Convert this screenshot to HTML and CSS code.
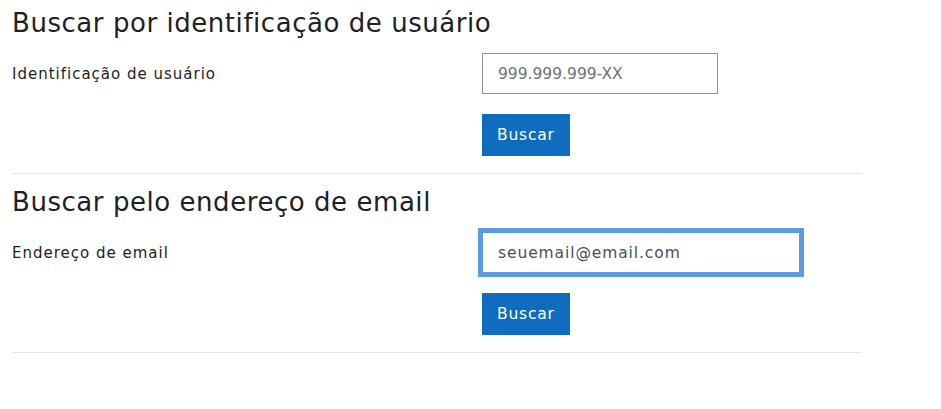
FILE: index.html
```html
<!DOCTYPE html>
<html lang="pt-BR">
<head>
<meta charset="utf-8">
<title>Buscar</title>
<link rel="stylesheet" href="styles.css">
</head>
<body>
<div class="page">
  <section class="search first">
    <h3 class="search-title">Buscar por identificação de usuário</h3>
    <div class="form-row">
      <label class="form-label" for="uid">Identificação de usuário</label>
      <div class="form-field"><input id="uid" class="text-input narrow" type="text" placeholder="999.999.999-XX"></div>
    </div>
    <div class="form-row actions">
      <div></div>
      <div class="form-field"><button class="btn" type="button">Buscar</button></div>
    </div>
  </section>
  <hr class="divider">
  <section class="search">
    <h3 class="search-title">Buscar pelo endereço de email</h3>
    <div class="form-row">
      <label class="form-label" for="mail">Endereço de email</label>
      <div class="form-field"><input id="mail" class="text-input wide focused" type="text" value="seuemail@email.com"></div>
    </div>
    <div class="form-row actions">
      <div></div>
      <div class="form-field"><button class="btn" type="button">Buscar</button></div>
    </div>
  </section>
  <hr class="divider">
</div>
</body>
</html>
```
FILE: styles.css
```css
* { box-sizing: border-box; }
html, body { margin: 0; padding: 0; background: #ffffff; }
body {
  font-family: "DejaVu Sans", Inter, sans-serif;
  color: #1d2125;
}
.page {
  width: 862px;
  padding-left: 12px;
}
.search { padding-top: 13px; }
.search.first { padding-top: 8px; }
.search-title {
  margin: 0 0 15px 0;
  font-size: 26px;
  line-height: 30px;
  letter-spacing: 0.55px;
  font-weight: 400;
  color: #1d2125;
}
.form-row {
  display: grid;
  grid-template-columns: 470px 1fr;
  align-items: center;
}
.form-row.actions { margin-top: 20px; }
.form-label {
  font-size: 15px;
  letter-spacing: 1px;
  color: #1d2125;
}
.text-input {
  display: block;
  height: 41px;
  padding: 0 15px;
  border: 1px solid #8f959e;
  border-radius: 0;
  font-family: inherit;
  font-size: 15.5px;
  letter-spacing: 0.9px;
  color: #495057;
  background: #fff;
  outline: none;
}
.text-input::placeholder { color: #6a737b; opacity: 1; letter-spacing: 0; }
.text-input.narrow { width: 236px; }
.text-input.wide { width: 318px; }
.text-input.focused {
  border-color: #5b9be0;
  box-shadow: 0 0 0 4px #5b9be0;
}
.btn {
  display: block;
  height: 42px;
  padding: 0 15px;
  border: 0;
  border-radius: 0;
  background: #0f6cbf;
  color: #fff;
  font-family: inherit;
  font-size: 15.5px;
  letter-spacing: 0.8px;
  cursor: pointer;
}
.divider {
  margin: 17px 0 0 0;
  border: 0;
  border-top: 1px solid #e4e5e8;
  height: 0;
}
```
